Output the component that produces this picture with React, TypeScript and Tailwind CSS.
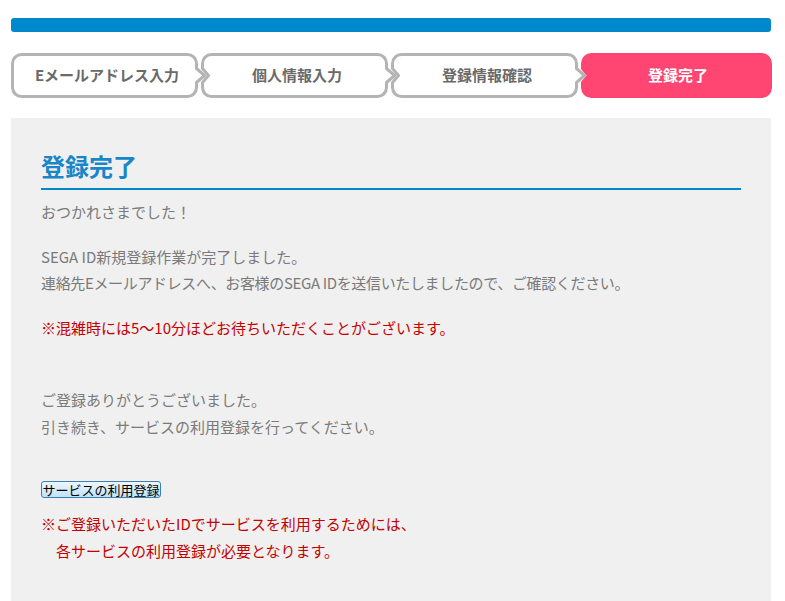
const steps = ["Eメールアドレス入力", "個人情報入力", "登録情報確認", "登録完了"];

function StepShape({ first, last }: { first: boolean; last: boolean }) {
  const W = 190;
  const H = 45;
  const i = 1.5;
  const r = 9;
  const cy = H / 2;
  const R = last ? W - 0.5 : W - 4.5;
  let d = `M ${i + r} ${i} H ${R - r} A ${r} ${r} 0 0 1 ${R} ${i + r}`;
  if (!last) d += ` V ${cy - 7} L ${R + 8} ${cy} L ${R} ${cy + 7}`;
  d += ` V ${H - i - r} A ${r} ${r} 0 0 1 ${R - r} ${H - i} H ${i + r} A ${r} ${r} 0 0 1 ${i} ${H - i - r}`;
  if (!first) d += ` V ${cy + 7} L ${i + 6} ${cy} L ${i} ${cy - 7}`;
  d += ` V ${i + r} A ${r} ${r} 0 0 1 ${i + r} ${i} Z`;
  return (
    <svg
      className="absolute inset-0 overflow-visible"
      width={W}
      height={H}
      viewBox={`0 0 ${W} ${H}`}
      aria-hidden="true"
    >
      {last ? (
        <path d={d} fill="#ff4571" stroke="#ff4571" strokeWidth="3" strokeLinejoin="round" />
      ) : (
        <path d={d} fill="#ffffff" stroke="#b4b4b4" strokeWidth="3" strokeLinejoin="round" />
      )}
    </svg>
  );
}

export default function App() {
  return (
    <div className="min-h-[601px] bg-white font-['Noto_Sans_CJK_JP','Noto_Sans',sans-serif]">
      <div className="ml-[11px] w-[760px] pt-[18px]">
        <div className="h-[14px] rounded-[3px] bg-[#0088cc]" />

        <ol className="mt-[21px] flex">
          {steps.map((s, idx) => (
            <li key={s} className="relative h-[45px] w-[190px]">
              <StepShape first={idx === 0} last={idx === steps.length - 1} />
              <span
                className={
                  idx === steps.length - 1
                    ? "relative flex h-full items-center justify-center pl-[4px] text-[15px] font-bold text-white"
                    : "relative flex h-full items-center justify-center pl-[2px] text-[15px] font-bold text-[#6a6a6a]"
                }
              >
                {s}
              </span>
            </li>
          ))}
        </ol>

        <section className="mt-[20px] bg-[#f0f0f0] px-[30px] pt-[31px] pb-[37px] text-[15px] leading-[26.5px] text-[#7a7a7a]">
          <h1 className="border-b-2 border-[#0088cc] pb-[5px] text-[24px] leading-[34px] font-bold text-[#1a86c8]">
            登録完了
          </h1>

          <p className="mt-[9px]">おつかれさまでした！</p>

          <p className="mt-[18px]">
            SEGA ID新規登録作業が完了しました。
            <br />
            <span className="tracking-[-0.35px]">
              連絡先Eメールアドレスへ、お客様のSEGA IDを送信いたしましたので、ご確認ください。
            </span>
          </p>

          <p className="mt-[18px] text-[#c40000]">※混雑時には5〜10分ほどお待ちいただくことがございます。</p>

          <p className="mt-[46px]">
            ご登録ありがとうございました。
            <br />
            引き続き、サービスの利用登録を行ってください。
          </p>

          <button
            type="button"
            className="mt-[41px] block h-[17px] w-[120px] rounded-[3px] border border-[#3c7fb1] bg-linear-to-b from-[#eef7fd] to-[#bfe2f7] text-[13px] leading-[15px] text-black"
          >
            サービスの利用登録
          </button>

          <p className="mt-[13px] text-[#c40000]">
            ※ご登録いただいたIDでサービスを利用するためには、
            <br />
            <span className="pl-[1em]">各サービスの利用登録が必要となります。</span>
          </p>
        </section>
      </div>
    </div>
  );
}
